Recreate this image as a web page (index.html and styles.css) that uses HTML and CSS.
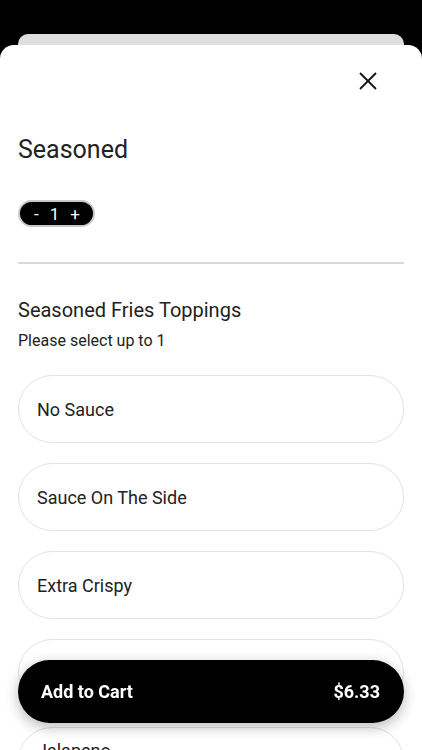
FILE: index.html
```html
<!DOCTYPE html>
<html lang="en">

<head>
    <meta charset="UTF-8">
    <meta name="viewport" content="width=device-width, initial-scale=1.0">
    <title>Seasoned</title>
    <link rel="stylesheet" href="styles.css">
</head>

<body>
    <div class="backdrop"></div>

    <div class="sheet">
        <div class="sheet-top">
            <button class="close" aria-label="Close">
                <svg width="18" height="18" viewBox="0 0 18 18">
                    <path d="M1 1L17 17M17 1L1 17" stroke="#111" stroke-width="1.8" fill="none" />
                </svg>
            </button>
        </div>

        <h1 class="item-title">Seasoned</h1>

        <div class="stepper">
            <span>-</span>
            <span>1</span>
            <span>+</span>
        </div>

        <hr class="divider">

        <h2 class="group-title">Seasoned Fries Toppings</h2>
        <p class="group-note">Please select up to 1</p>

        <div class="options">
            <div class="option">No Sauce</div>
            <div class="option">Sauce On The Side</div>
            <div class="option">Extra Crispy</div>
            <div class="option">Light Salt</div>
            <div class="option option-price">
                <span>Jalapeno</span>
                <span class="price">+$0.50</span>
            </div>
        </div>
    </div>

    <button class="cart-button">
        <span>Add to Cart</span>
        <span>$6.33</span>
    </button>
</body>

</html>
```

FILE: styles.css
```css
body {
    margin: 0;
    height: 750px;
    overflow: hidden;
    background-color: #000;
    font-family: Roboto, 'Noto Sans', sans-serif;
    color: #222;
}

.backdrop {
    margin: 34px 18px 0;
    height: 11px;
    background-color: #dedede;
    border-radius: 10px 10px 0 0;
}

.sheet {
    background-color: #fff;
    border-radius: 14px 14px 0 0;
    padding: 0 18px 120px;
}

.sheet-top {
    display: flex;
    justify-content: flex-end;
    padding-top: 27px;
}

.close {
    border: none;
    background: none;
    padding: 0;
    margin-right: 27px;
    width: 18px;
    height: 18px;
    cursor: pointer;
}

.close svg {
    display: block;
}

.item-title {
    margin: 45px 0 0;
    font-size: 25px;
    line-height: 30px;
    font-weight: 400;
}

.stepper {
    display: inline-flex;
    align-items: center;
    gap: 11px;
    margin-top: 35px;
    height: 23px;
    padding: 0 13px 0 14px;
    background-color: #000;
    color: #fff;
    border: 2px solid #c8c8c8;
    border-radius: 14px;
    font-size: 17px;
}

.divider {
    border: none;
    height: 2px;
    background-color: #d8d8d8;
    margin: 35px 0 0;
}

.group-title {
    margin: 34px 0 0;
    font-size: 20px;
    line-height: 24px;
    font-weight: 400;
}

.group-note {
    margin: 9px 0 0;
    font-size: 16px;
    line-height: 20px;
}

.options {
    display: flex;
    flex-direction: column;
    gap: 20px;
    margin-top: 24px;
}

.option {
    height: 66px;
    display: flex;
    align-items: center;
    padding-left: 18px;
    border: 1px solid #e2e2e2;
    border-radius: 34px;
    font-size: 18px;
}

.option-price {
    flex-direction: column;
    align-items: flex-start;
    justify-content: flex-start;
    padding-top: 12px;
    height: 54px;
}

.price {
    font-size: 15px;
    color: #666;
    margin-top: 4px;
}

.cart-button {
    position: fixed;
    left: 18px;
    right: 18px;
    bottom: 27px;
    height: 63px;
    display: flex;
    align-items: center;
    justify-content: space-between;
    padding: 0 24px 0 23px;
    border: none;
    border-radius: 32px;
    background-color: #000;
    color: #fff;
    font-family: Roboto, 'Noto Sans', sans-serif;
    font-size: 18px;
    font-weight: 700;
    box-shadow: 0 4px 14px rgba(0, 0, 0, 0.28);
}
```
